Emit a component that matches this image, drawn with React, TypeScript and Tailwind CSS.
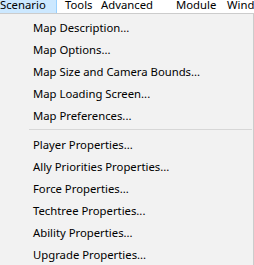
import React from 'react';

// 메뉴 항목 정의
const groups: string[][] = [
  [
    'Map Description...',
    'Map Options...',
    'Map Size and Camera Bounds...',
    'Map Loading Screen...',
    'Map Preferences...',
  ],
  [
    'Player Properties...',
    'Ally Priorities Properties...',
    'Force Properties...',
    'Techtree Properties...',
    'Ability Properties...',
    'Upgrade Properties...',
  ],
];

const App: React.FC = () => {
  return (
    <div
      className="w-[254px] h-[265px] overflow-hidden bg-white text-[11.3px] text-black"
      style={{ fontFamily: '"Noto Sans", "Open Sans", sans-serif' }}
    >
      {/* 상단 메뉴바 */}
      <div className="h-[13px] overflow-hidden bg-white">
        <div className="flex -mt-[5px] whitespace-nowrap leading-[19px]">
          <div className="shrink-0 h-[20px] w-[57px] bg-[#cce8ff] border-r border-[#99d1ff]">Scenario</div>
          <div className="shrink-0 h-[20px] w-[37px] pl-[8px]">Tools</div>
          <div className="shrink-0 h-[20px] w-[75px] pl-[7px]">Advanced</div>
          <div className="shrink-0 h-[20px] w-[51px] pl-[7px]">Module</div>
          <div className="shrink-0 h-[20px] pl-[7px]">Window</div>
        </div>
      </div>

      {/* 드롭다운 메뉴 */}
      <div className="h-[252px] border-t border-r border-[#cccccc] bg-[#f2f2f2] pt-[2px]">
        {groups.map((items, gi) => (
          <div key={gi}>
            {gi > 0 && (
              <div className="h-[7px] flex items-center pl-[29px] pr-[1px]">
                <div className="w-full h-px bg-[#d7d7d7]" />
              </div>
            )}
            {items.map((label) => (
              <div key={label} className="h-[22px] leading-[23px] pl-[33px] whitespace-nowrap">
                {label}
              </div>
            ))}
          </div>
        ))}
      </div>
    </div>
  );
};

export default App;
